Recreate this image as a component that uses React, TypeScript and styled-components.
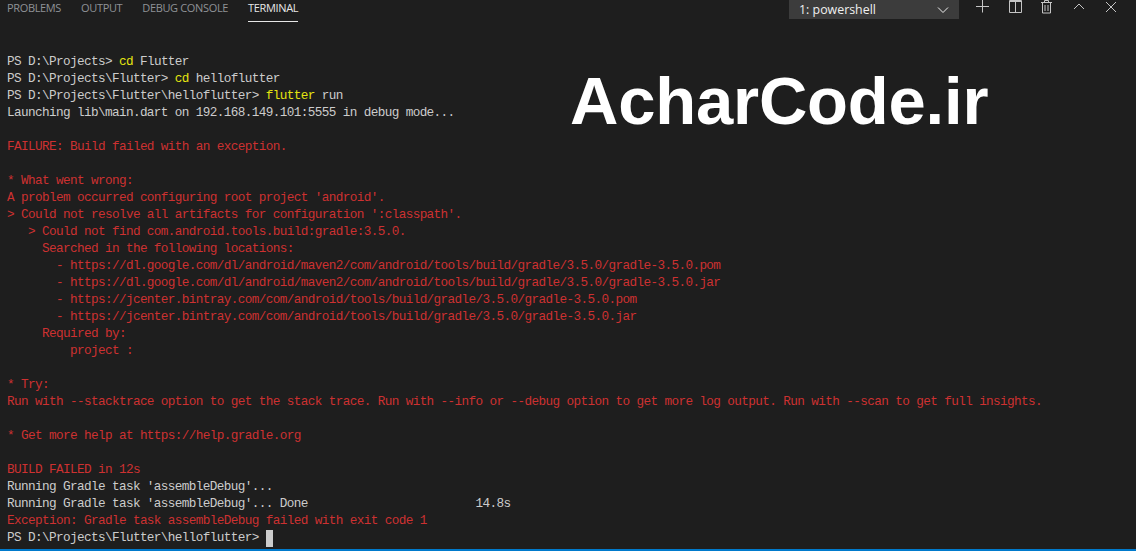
import React from "react";
import styled, { createGlobalStyle } from "styled-components";

const Global = createGlobalStyle`
  html, body { margin: 0; padding: 0; background: #1e1e1e; }
  body { width: 1136px; height: 551px; overflow: hidden; }
`;

const Page = styled.div`
  position: relative;
  width: 1136px;
  height: 551px;
  display: flex;
  flex-direction: column;
  background: #1e1e1e;
  overflow: hidden;
`;

const PanelHeader = styled.header`
  display: flex;
  align-items: flex-start;
  justify-content: space-between;
  height: 53px;
  flex: none;
`;

const Tabs = styled.nav`
  display: flex;
  gap: 20px;
  padding-left: 7px;
`;

const Tab = styled.div<{ $active?: boolean }>`
  height: 21px;
  font: 11px/16px "Open Sans", "Noto Sans", sans-serif;
  letter-spacing: -0.35px;
  color: ${(p) => (p.$active ? "#e7e7e7" : "#8f9296")};
  border-bottom: 1px solid ${(p) => (p.$active ? "#e7e7e7" : "transparent")};
`;

const Actions = styled.div`
  display: flex;
  align-items: flex-start;
  padding-right: 9px;
`;

const Select = styled.div`
  width: 170px;
  height: 19px;
  margin-right: 8px;
  padding: 0 8px 0 10px;
  box-sizing: border-box;
  display: flex;
  align-items: center;
  justify-content: space-between;
  background: #3c3c3c;
  color: #f0f0f0;
  font: 12.4px/18px "Open Sans", "Noto Sans", sans-serif;
`;

const IconSlot = styled.span`
  width: 32px;
  height: 14px;
  display: flex;
  justify-content: center;
  color: #c5c5c5;
`;

const Glyph = styled.svg`
  width: 16px;
  height: 16px;
  fill: none;
  stroke: currentColor;
  stroke-width: 1;
`;

const Terminal = styled.main`
  flex: 1;
  padding-left: 7px;
  font-family: "Liberation Mono", "DejaVu Sans Mono", monospace;
  font-size: 12.7px;
  letter-spacing: -0.62px;
  line-height: 17px;
  color: #cccccc;
  white-space: pre;
`;

const Line = styled.div<{ $error?: boolean }>`
  height: 17px;
  color: ${(p) => (p.$error ? "#cd3131" : "inherit")};
`;

const Command = styled.span`
  color: #e5e510;
`;

const Cursor = styled.span`
  display: inline-block;
  width: 7px;
  height: 17px;
  vertical-align: -6px;
  background: #cccccc;
`;

const StatusBar = styled.footer`
  height: 2px;
  flex: none;
  background: #007acc;
`;

const Watermark = styled.div`
  position: absolute;
  left: 570px;
  top: 62px;
  font: 700 67px/78px "Liberation Sans", Arial, sans-serif;
  letter-spacing: -0.2px;
  color: #ffffff;
`;

type L = { t?: string; e?: boolean; cmd?: [string, string, string?]; cursor?: boolean };

const lines: L[] = [
  { cmd: ["PS D:\\Projects> ", "cd", " Flutter"] },
  { cmd: ["PS D:\\Projects\\Flutter> ", "cd", " helloflutter"] },
  { cmd: ["PS D:\\Projects\\Flutter\\helloflutter> ", "flutter", " run"] },
  { t: "Launching lib\\main.dart on 192.168.149.101:5555 in debug mode..." },
  { t: "" },
  { t: "FAILURE: Build failed with an exception.", e: true },
  { t: "" },
  { t: "* What went wrong:", e: true },
  { t: "A problem occurred configuring root project 'android'.", e: true },
  { t: "> Could not resolve all artifacts for configuration ':classpath'.", e: true },
  { t: "   > Could not find com.android.tools.build:gradle:3.5.0.", e: true },
  { t: "     Searched in the following locations:", e: true },
  { t: "       - https://dl.google.com/dl/android/maven2/com/android/tools/build/gradle/3.5.0/gradle-3.5.0.pom", e: true },
  { t: "       - https://dl.google.com/dl/android/maven2/com/android/tools/build/gradle/3.5.0/gradle-3.5.0.jar", e: true },
  { t: "       - https://jcenter.bintray.com/com/android/tools/build/gradle/3.5.0/gradle-3.5.0.pom", e: true },
  { t: "       - https://jcenter.bintray.com/com/android/tools/build/gradle/3.5.0/gradle-3.5.0.jar", e: true },
  { t: "     Required by:", e: true },
  { t: "         project :", e: true },
  { t: "" },
  { t: "* Try:", e: true },
  { t: "Run with --stacktrace option to get the stack trace. Run with --info or --debug option to get more log output. Run with --scan to get full insights.", e: true },
  { t: "" },
  { t: "* Get more help at https://help.gradle.org", e: true },
  { t: "" },
  { t: "BUILD FAILED in 12s", e: true },
  { t: "Running Gradle task 'assembleDebug'..." },
  { t: "Running Gradle task 'assembleDebug'... Done                        14.8s" },
  { t: "Exception: Gradle task assembleDebug failed with exit code 1", e: true },
  { t: "PS D:\\Projects\\Flutter\\helloflutter> ", cursor: true },
];

export default function App() {
  return (
    <Page>
      <Global />
      <PanelHeader>
        <Tabs>
          <Tab>PROBLEMS</Tab>
          <Tab>OUTPUT</Tab>
          <Tab>DEBUG CONSOLE</Tab>
          <Tab $active>TERMINAL</Tab>
        </Tabs>
        <Actions>
          <Select>
            <span>1: powershell</span>
            <Glyph viewBox="0 0 16 16"><path d="M3 5.5l5 5 5-5" /></Glyph>
          </Select>
          <IconSlot>
            <Glyph viewBox="0 0 16 16"><path d="M7.5 0v12.5M1 6.5h13" /></Glyph>
          </IconSlot>
          <IconSlot>
            <Glyph viewBox="0 0 16 16"><path d="M2.5.5h12v12h-12zM8.5.5v12M2.5 1.5h12" /></Glyph>
          </IconSlot>
          <IconSlot>
            <Glyph viewBox="0 0 16 16"><path d="M2 2.5h11M5.5 2.5V.5h4v2M3.5 2.5V13h8V2.5M6 5v6M9 5v6" /></Glyph>
          </IconSlot>
          <IconSlot>
            <Glyph viewBox="0 0 16 16"><path d="M3 9l5-5 5 5" /></Glyph>
          </IconSlot>
          <IconSlot>
            <Glyph viewBox="0 0 16 16"><path d="M3 2l10 10M13 2L3 12" /></Glyph>
          </IconSlot>
        </Actions>
      </PanelHeader>
      <Terminal>
        {lines.map((l, i) => (
          <Line key={i} $error={l.e}>
            {l.cmd ? (
              <>
                {l.cmd[0]}
                <Command>{l.cmd[1]}</Command>
                {l.cmd[2]}
              </>
            ) : (
              l.t
            )}
            {l.cursor && <Cursor />}
          </Line>
        ))}
      </Terminal>
      <StatusBar />
      <Watermark>AcharCode.ir</Watermark>
    </Page>
  );
}
